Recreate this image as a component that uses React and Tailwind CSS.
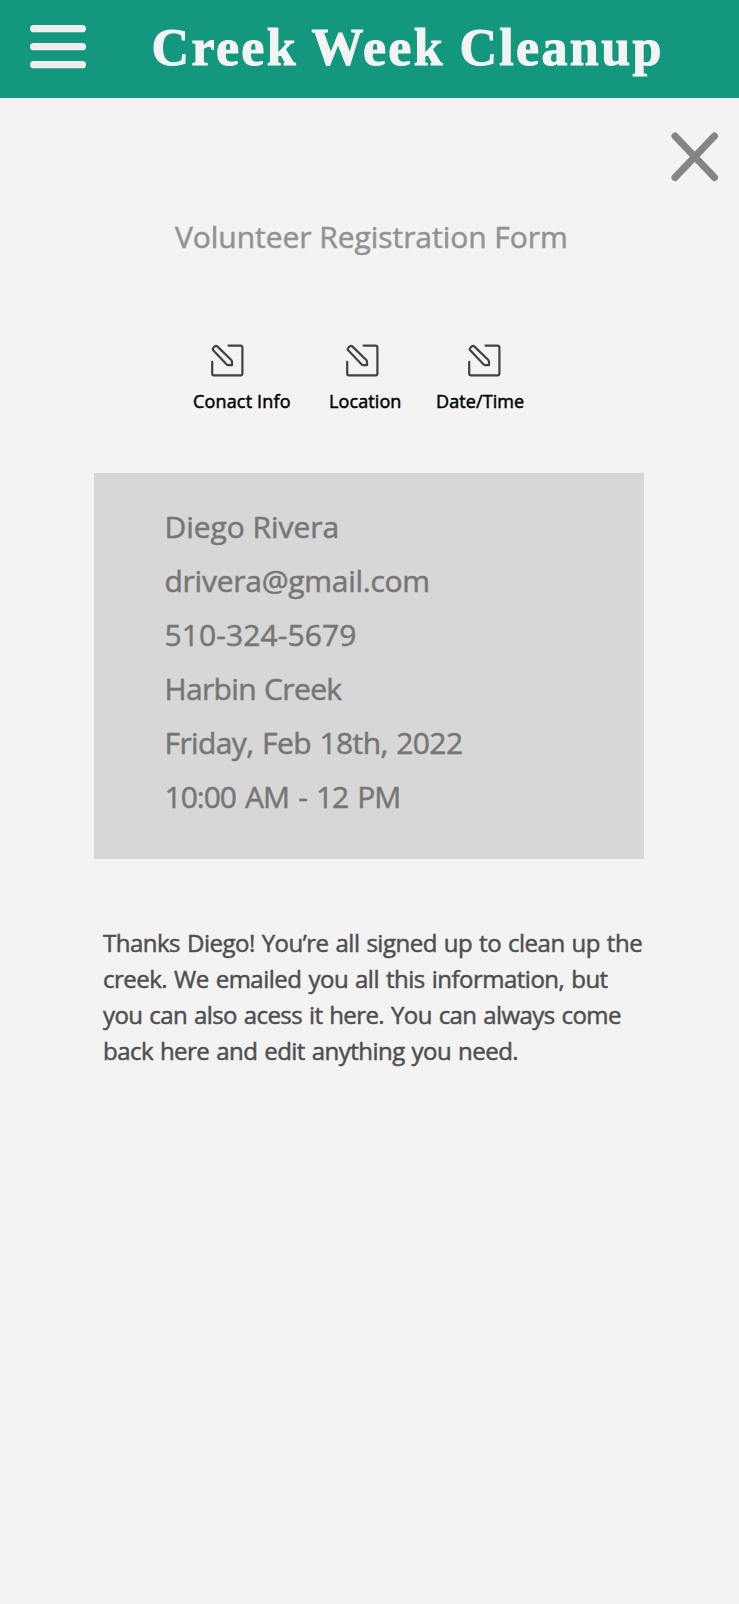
import React from "react";

const steps = [
  { label: "Conact Info", className: "w-[98px]", text: "tracking-[0.16px]", icon: "ml-[17.5px]" },
  { label: "Location", className: "w-[72px] ml-[38px]", text: "tracking-[0.1px]", icon: "ml-[16.5px]" },
  { label: "Date/Time", className: "w-[90px] ml-[35px]", text: "tracking-[0.1px]", icon: "ml-[32px]" },
];

const details = [
  { value: "Diego Rivera", className: "tracking-[-0.05px]" },
  { value: "drivera@gmail.com", className: "tracking-[-0.26px]" },
  { value: "510-324-5679", className: "tracking-[0.1px]" },
  { value: "Harbin Creek", className: "tracking-[-0.65px] [word-spacing:1px]" },
  { value: "Friday, Feb 18th, 2022", className: "tracking-[-0.6px] [word-spacing:1.4px]" },
  { value: "10:00 AM - 12 PM", className: "tracking-[-1px] [word-spacing:2.3px]" },
];

const message = [
  { value: "Thanks Diego! You’re all signed up to clean up the", className: "tracking-[-0.5px]" },
  { value: "creek. We emailed you all this information, but", className: "tracking-[-0.5px]" },
  { value: "you can also acess it here. You can always come", className: "tracking-[-0.58px]" },
  { value: "back here and edit anything you need.", className: "tracking-[-0.53px]" },
];

const MenuIcon = () => (
  <svg width="57" height="45" viewBox="0 0 57 45" fill="#eeeeee">
    <rect x="0" y="0" width="56" height="7.3" rx="3.65" />
    <rect x="0" y="18" width="56" height="7.3" rx="3.65" />
    <rect x="0" y="36" width="56" height="7.3" rx="3.65" />
  </svg>
);

const CloseIcon = () => (
  <svg width="48" height="50" viewBox="0 0 48 50" fill="none">
    <path d="M4 4L43.5 45.5M43.5 4L4 45.5" stroke="#858585" strokeWidth="7" strokeLinecap="round" />
  </svg>
);

const EditIcon = ({ className }) => (
  <svg className={className} width="33" height="33" viewBox="0 0 33 33" fill="none" stroke="#424242" strokeWidth="2.2" strokeLinecap="round" strokeLinejoin="round">
    <path d="M17.5 1.6H29.6Q31.4 1.6 31.4 3.4V29.6Q31.4 31.4 29.6 31.4H3Q1.2 31.4 1.2 29.6V17.8" />
    <path d="M2.2 6.3Q1.2 5 2.4 3.8L3.6 2.5Q5 1.2 6.3 2.4L20.3 16Q21 16.7 21 17.7V21.2H17.3Q16.4 21.2 15.7 20.5L2.2 6.3Z" />
  </svg>
);

const App = () => {
  return (
    <div className="min-h-[1604px] w-[739px] bg-[#f3f3f3] font-['Open_Sans',sans-serif] [-webkit-text-stroke-width:0.5px]">
      {/* Header */}
      <header className="flex h-[98px] bg-[#13987f]">
        <button className="ml-[29.5px] mt-[25px] h-[45px] w-[57px]" aria-label="Menu">
          <MenuIcon />
        </button>
        <h1 className="ml-[65px] mt-[18px] whitespace-nowrap font-['Liberation_Serif',serif] text-[52px] leading-[60px] font-bold tracking-[2.35px] text-[#f3f3f3] [-webkit-text-stroke-width:1px] [word-spacing:-1px]">
          Creek Week Cleanup
        </h1>
      </header>

      <main className="flex flex-col">
        <button className="ml-[670.5px] mt-[34px] h-[50px] w-[48px]" aria-label="Close">
          <CloseIcon />
        </button>

        <h2 className="ml-[175px] mt-[35px] whitespace-nowrap text-[30px] leading-[40px] tracking-[-0.05px] text-[#929292]">
          Volunteer Registration Form
        </h2>

        {/* Edit shortcuts */}
        <div className="ml-[193px] mt-[87px] flex h-[68px]">
          {steps.map((step) => (
            <button key={step.label} className={`shrink-0 text-left ${step.className}`}>
              <EditIcon className={step.icon} />
              <span className={`mt-[12px] block whitespace-nowrap text-[18px] leading-6 text-black ${step.text}`}>
                {step.label}
              </span>
            </button>
          ))}
        </div>

        {/* Registration details */}
        <section className="ml-[94px] mt-[61px] h-[386px] w-[550px] bg-[#d7d7d7] pl-[70.5px] pt-[27px] text-[30px] leading-[54px] text-[#767676]">
          {details.map((item) => (
            <p key={item.value} className={`whitespace-nowrap ${item.className}`}>
              {item.value}
            </p>
          ))}
        </section>

        {/* Confirmation message */}
        <div className="ml-[103px] mt-[66px] text-[24px] leading-9 text-[#4f4f4f] [word-spacing:1.2px]">
          {message.map((line) => (
            <p key={line.value} className={`whitespace-nowrap ${line.className}`}>
              {line.value}
            </p>
          ))}
        </div>
      </main>
    </div>
  );
};

export default App;
